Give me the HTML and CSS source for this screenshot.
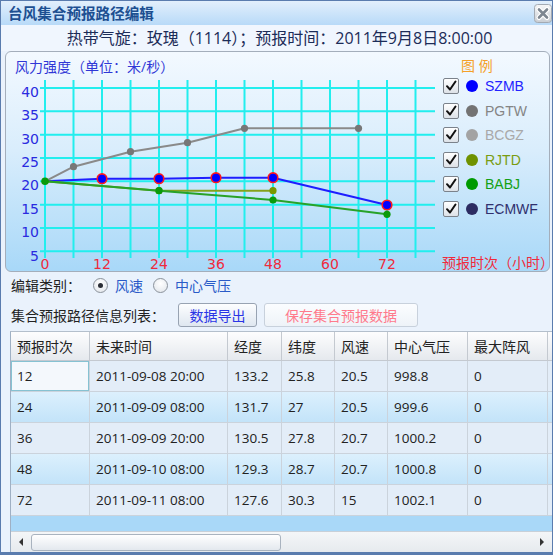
FILE: index.html
```html
<!DOCTYPE html>
<html lang="zh">
<head>
<meta charset="utf-8">
<title>台风集合预报路径编辑</title>
<link rel="stylesheet" href="styles.css">
</head>
<body>
<div class="window">
  <div class="titlebar">
    <span class="title">台风集合预报路径编辑</span>
    <svg class="close" width="18" height="19" viewBox="0 0 18 19">
      <defs>
        <linearGradient id="cg" x1="0" y1="0" x2="0" y2="1">
          <stop offset="0" stop-color="#f6f7f8"/>
          <stop offset="1" stop-color="#c9ced4"/>
        </linearGradient>
      </defs>
      <rect x="0.5" y="0.5" width="17" height="18" rx="3" fill="url(#cg)" stroke="#a3aab3"/>
      <path d="M5 5.5L13 13.5M13 5.5L5 13.5" stroke="#ffffff" stroke-width="5" stroke-linecap="round"/>
      <path d="M5 5.5L13 13.5M13 5.5L5 13.5" stroke="#7d8690" stroke-width="2.6" stroke-linecap="round"/>
    </svg>
  </div>

  <div class="header">热带气旋：玫瑰（1114）；预报时间：2011年9月8日8:00:00</div>

  <div class="panel">
    <svg class="plot" width="436" height="219" viewBox="6 52 436 219">
      <text class="ctitle" x="15" y="72">风力强度（单位：米/秒）</text>
      <path class="grid" d="M40 88H435M40 111.3H435M40 134.7H435M40 158H435M40 181.3H435M40 204.7H435M40 228H435M40 251.3H435"/>
      <path class="grid" d="M45 80V258M73.5 80V258M102 80V258M130.5 80V258M159 80V258M187.5 80V258M216 80V258M244.5 80V258M273 80V258M301.5 80V258M330 80V258M358.5 80V258M387 80V258M415.5 80V258"/>
      <g class="ylab">
        <text x="39" y="96.5">40</text>
        <text x="39" y="120">35</text>
        <text x="39" y="143.5">30</text>
        <text x="39" y="167">25</text>
        <text x="39" y="190">20</text>
        <text x="39" y="213.5">15</text>
        <text x="39" y="237">10</text>
        <text x="39" y="260.5">5</text>
      </g>
      <g class="xlab">
        <text x="45" y="268.5">0</text>
        <text x="102" y="268.5">12</text>
        <text x="159" y="268.5">24</text>
        <text x="216" y="268.5">36</text>
        <text x="273" y="268.5">48</text>
        <text x="330" y="268.5">60</text>
        <text x="387" y="268.5">72</text>
      </g>
      <polyline class="s-pgtw" points="45,181.3 73.5,166.7 130.5,151.7 187.5,142.7 244.5,128.3 358.5,128.3"/>
      <g class="d-pgtw">
        <circle cx="73.5" cy="166.7" r="3.6"/>
        <circle cx="130.5" cy="151.7" r="3.6"/>
        <circle cx="187.5" cy="142.7" r="3.6"/>
        <circle cx="244.5" cy="128.3" r="3.6"/>
        <circle cx="358.5" cy="128.3" r="3.6"/>
      </g>
      <polyline class="s-szmb" points="45,181.3 102,178.7 159,178.7 216,177.7 273,177.7 387,205"/>
      <g class="d-szmb">
        <circle cx="102" cy="178.7" r="4.8"/>
        <circle cx="159" cy="178.7" r="4.8"/>
        <circle cx="216" cy="177.7" r="4.8"/>
        <circle cx="273" cy="177.7" r="4.8"/>
        <circle cx="387" cy="205" r="4.8"/>
      </g>
      <polyline class="s-rjtd" points="45,181.3 159,190.7 273,190.7"/>
      <g class="d-rjtd">
        <circle cx="159" cy="190.7" r="3.6"/>
        <circle cx="273" cy="190.7" r="3.6"/>
      </g>
      <polyline class="s-babj" points="45,181.3 159,190.7 273,200 387,214.3"/>
      <g class="d-babj">
        <circle cx="45" cy="181.3" r="3.8"/>
        <circle cx="159" cy="190.7" r="3.6"/>
        <circle cx="273" cy="200" r="3.6"/>
        <circle cx="387" cy="214.3" r="3.6"/>
      </g>
    </svg>

    <div class="legend">
      <div class="legend-title">图 例</div>
      <div class="legend-row">
        <span class="cb"><svg width="14" height="14" viewBox="0 0 14 14"><path d="M3 7.2L6 10.5L11.5 2.5"/></svg></span>
        <span class="dot dot-szmb"></span><span class="lname n-szmb">SZMB</span>
      </div>
      <div class="legend-row">
        <span class="cb"><svg width="14" height="14" viewBox="0 0 14 14"><path d="M3 7.2L6 10.5L11.5 2.5"/></svg></span>
        <span class="dot dot-pgtw"></span><span class="lname n-pgtw">PGTW</span>
      </div>
      <div class="legend-row">
        <span class="cb"><svg width="14" height="14" viewBox="0 0 14 14"><path d="M3 7.2L6 10.5L11.5 2.5"/></svg></span>
        <span class="dot dot-bcgz"></span><span class="lname n-bcgz">BCGZ</span>
      </div>
      <div class="legend-row">
        <span class="cb"><svg width="14" height="14" viewBox="0 0 14 14"><path d="M3 7.2L6 10.5L11.5 2.5"/></svg></span>
        <span class="dot dot-rjtd"></span><span class="lname n-rjtd">RJTD</span>
      </div>
      <div class="legend-row">
        <span class="cb"><svg width="14" height="14" viewBox="0 0 14 14"><path d="M3 7.2L6 10.5L11.5 2.5"/></svg></span>
        <span class="dot dot-babj"></span><span class="lname n-babj">BABJ</span>
      </div>
      <div class="legend-row">
        <span class="cb"><svg width="14" height="14" viewBox="0 0 14 14"><path d="M3 7.2L6 10.5L11.5 2.5"/></svg></span>
        <span class="dot dot-ecmwf"></span><span class="lname n-ecmwf">ECMWF</span>
      </div>
      <div class="axis-unit">预报时次（小时）</div>
    </div>
  </div>

  <div class="edit-row">
    <span>编辑类别：</span>
    <span class="radio checked"></span><span class="rlabel">风速</span>
    <span class="radio second"></span><span class="rlabel">中心气压</span>
  </div>

  <div class="list-row">
    <span>集合预报路径信息列表：</span>
    <button class="btn btn-export">数据导出</button>
    <button class="btn btn-save">保存集合预报数据</button>
  </div>

  <div class="table">
    <div class="trow thead">
      <div class="cell">预报时次</div>
      <div class="cell">未来时间</div>
      <div class="cell">经度</div>
      <div class="cell">纬度</div>
      <div class="cell">风速</div>
      <div class="cell">中心气压</div>
      <div class="cell">最大阵风</div>
      <div class="cell"></div>
    </div>
    <div class="trow odd">
      <div class="cell selected">12</div>
      <div class="cell">2011-09-08 20:00</div>
      <div class="cell">133.2</div>
      <div class="cell">25.8</div>
      <div class="cell">20.5</div>
      <div class="cell">998.8</div>
      <div class="cell">0</div>
      <div class="cell"></div>
    </div>
    <div class="trow even">
      <div class="cell">24</div>
      <div class="cell">2011-09-09 08:00</div>
      <div class="cell">131.7</div>
      <div class="cell">27</div>
      <div class="cell">20.5</div>
      <div class="cell">999.6</div>
      <div class="cell">0</div>
      <div class="cell"></div>
    </div>
    <div class="trow odd">
      <div class="cell">36</div>
      <div class="cell">2011-09-09 20:00</div>
      <div class="cell">130.5</div>
      <div class="cell">27.8</div>
      <div class="cell">20.7</div>
      <div class="cell">1000.2</div>
      <div class="cell">0</div>
      <div class="cell"></div>
    </div>
    <div class="trow even">
      <div class="cell">48</div>
      <div class="cell">2011-09-10 08:00</div>
      <div class="cell">129.3</div>
      <div class="cell">28.7</div>
      <div class="cell">20.7</div>
      <div class="cell">1000.8</div>
      <div class="cell">0</div>
      <div class="cell"></div>
    </div>
    <div class="trow odd">
      <div class="cell">72</div>
      <div class="cell">2011-09-11 08:00</div>
      <div class="cell">127.6</div>
      <div class="cell">30.3</div>
      <div class="cell">15</div>
      <div class="cell">1002.1</div>
      <div class="cell">0</div>
      <div class="cell"></div>
    </div>
    <div class="tempty"></div>
    <div class="hscroll">
      <div class="sb-btn"><span class="tri-left"></span></div>
      <div class="sb-thumb"></div>
      <div class="sb-track"></div>
      <div class="sb-btn"><span class="tri-right"></span></div>
    </div>
  </div>
</div>
</body>
</html>
```

FILE: styles.css
```css
html, body {
  margin: 0;
  padding: 0;
  background: #ffffff;
}

body {
  font-family: "Open Sans", "Noto Sans CJK SC", sans-serif;
  color: #222222;
}

.window {
  width: 553px;
  height: 555px;
  box-sizing: border-box;
  border: 1px solid #5a7cae;
  border-bottom-width: 3px;
  background: #eaf2fc;
  display: flex;
  flex-direction: column;
  overflow: hidden;
}

/* title bar */
.titlebar {
  height: 24px;
  flex: none;
  background: linear-gradient(#e2effc, #b8daf8);
  display: flex;
  align-items: center;
  justify-content: space-between;
  padding: 0 0 0 7px;
}

.title {
  font-family: "Noto Sans CJK SC", sans-serif;
  font-size: 14.6px;
  font-weight: bold;
  color: #1d4f91;
  line-height: 24px;
}

.close {
  display: block;
  margin-top: 1px;
}

/* header */
.header {
  height: 26px;
  flex: none;
  line-height: 26px;
  text-align: center;
  font-size: 16px;
  color: #1c2c58;
  background: #f0f6fe;
  padding-left: 6px;
}

/* chart panel */
.panel {
  height: 221px;
  flex: none;
  box-sizing: border-box;
  margin: 0 2px 0 4px;
  border: 1px solid #a4aebb;
  border-radius: 6px;
  background: linear-gradient(#f3f9ff 0%, #d9edfc 45%, #a8d8f8 100%);
  display: flex;
}

.plot {
  display: block;
  flex: none;
  overflow: visible;
}

.ctitle {
  font-family: "Open Sans", "Noto Sans CJK SC", sans-serif;
  font-size: 14px;
  fill: #3037d6;
}

.grid {
  fill: none;
  stroke: #22eeee;
  stroke-width: 2;
}

.ylab text {
  font-family: "DejaVu Sans", sans-serif;
  font-size: 14px;
  fill: #2a2ae0;
  text-anchor: end;
}

.xlab text {
  font-family: "DejaVu Sans", sans-serif;
  font-size: 14px;
  fill: #f02a3c;
  text-anchor: middle;
}

.s-pgtw, .s-szmb, .s-rjtd, .s-babj {
  fill: none;
  stroke-width: 2;
  stroke-linejoin: round;
}

.s-pgtw { stroke: #8a8a8a; }
.s-szmb { stroke: #1e1eff; }
.s-rjtd { stroke: #84a21c; }
.s-babj { stroke: #28a228; }

.d-pgtw circle { fill: #777777; }
.d-szmb circle { fill: #0000ff; stroke: #ff1a1a; stroke-width: 1.6; }
.d-rjtd circle { fill: #789800; }
.d-babj circle { fill: #0a9a0a; }

/* legend */
.legend {
  flex: 1;
  display: flex;
  flex-direction: column;
  padding-top: 6px;
  min-width: 0;
}

.legend-title {
  font-size: 14px;
  line-height: 16px;
  color: #f5a028;
  padding-left: 19px;
}

.legend-row {
  height: 24.5px;
  display: flex;
  align-items: center;
  padding-left: 1px;
}

.cb {
  width: 16px;
  height: 16px;
  box-sizing: border-box;
  border: 1px solid #7b828b;
  border-radius: 2px;
  background: linear-gradient(#ffffff, #dde2e8);
  display: flex;
  align-items: center;
  justify-content: center;
}

.cb svg {
  display: block;
}

.cb path {
  fill: none;
  stroke: #111111;
  stroke-width: 2;
  stroke-linecap: round;
  stroke-linejoin: round;
}

.dot {
  width: 12px;
  height: 12px;
  border-radius: 50%;
  margin-left: 7px;
}

.dot-szmb { background: #0000ff; }
.dot-pgtw { background: #737373; }
.dot-bcgz { background: #a3a3a3; }
.dot-rjtd { background: #6f9200; }
.dot-babj { background: #009a00; }
.dot-ecmwf { background: #2c2c62; }

.lname {
  font-family: "Liberation Sans", sans-serif;
  font-size: 14px;
  margin-left: 7px;
}

.n-szmb { color: #2323ff; }
.n-pgtw { color: #858585; }
.n-bcgz { color: #a9a9a9; }
.n-rjtd { color: #7a9c12; }
.n-babj { color: #14a014; }
.n-ecmwf { color: #30306e; }

.axis-unit {
  margin-top: auto;
  font-size: 14px;
  line-height: 16px;
  color: #f02a3c;
  white-space: nowrap;
}

/* edit row */
.edit-row {
  height: 26px;
  flex: none;
  display: flex;
  align-items: center;
  padding-left: 10px;
  font-size: 14px;
  color: #222222;
}

.radio {
  width: 15px;
  height: 15px;
  box-sizing: border-box;
  border: 1px solid #8b929b;
  border-radius: 50%;
  background: radial-gradient(circle at 50% 35%, #ffffff, #dfe4ea);
  margin-left: 12px;
  display: flex;
  align-items: center;
  justify-content: center;
}

.radio.second {
  margin-left: 10px;
}

.radio.checked::after {
  content: "";
  width: 5px;
  height: 5px;
  border-radius: 50%;
  background: #2a2e36;
}

.rlabel {
  color: #2a5bc8;
  margin-left: 7px;
}

/* list row */
.list-row {
  height: 33px;
  flex: none;
  display: flex;
  align-items: center;
  padding-left: 10px;
  font-size: 14px;
  color: #222222;
}

.btn {
  height: 24px;
  box-sizing: border-box;
  border-radius: 3px;
  font-family: "Noto Sans CJK SC", sans-serif;
  font-size: 14px;
  padding: 0;
  line-height: 20px;
}

.btn-export {
  width: 79px;
  margin-left: 13px;
  border: 1px solid #98a3b2;
  background: linear-gradient(#fdfeff, #dfe7f0);
  color: #2a35e6;
}

.btn-save {
  width: 154px;
  margin-left: 7px;
  border: 1px solid #c8d1dc;
  background: linear-gradient(#fbfdff, #eef3f8);
  color: #ff7a8c;
}

/* table */
.table {
  flex: 1;
  margin-left: 9px;
  border-left: 1px solid #9fb0c4;
  border-top: 1px solid #b4bfcc;
  background: #a9d8f8;
  display: flex;
  flex-direction: column;
  min-height: 0;
}

.trow {
  display: grid;
  grid-template-columns: 79px 138px 54px 53px 53px 80px 80px 1fr;
  flex: none;
}

.thead {
  height: 29px;
  background: linear-gradient(#fdfdfe, #e4e8ed);
}

.trow.odd, .trow.even {
  height: 31px;
}

.trow.odd {
  background: #e3edf8;
}

.trow.even {
  background: linear-gradient(#dcf0fd, #c2e3f9);
}

.cell {
  box-sizing: border-box;
  border-right: 1px solid #cbd3dc;
  border-bottom: 1px solid #cbd3dc;
  padding-left: 6px;
  font-size: 13.5px;
  color: #222222;
  display: flex;
  align-items: center;
  white-space: nowrap;
  overflow: hidden;
}

.thead .cell {
  font-size: 14px;
  border-color: #c4c9d0;
}

.cell.selected {
  background: #f4f8fc;
  box-shadow: inset 0 0 0 1px #86c2d2;
}

.tempty {
  flex: 1;
}

.hscroll {
  height: 20px;
  flex: none;
  display: flex;
  align-items: center;
  background: linear-gradient(#f4f6f8, #e6eaee);
  border-top: 1px solid #c8d0d8;
}

.sb-btn {
  width: 20px;
  height: 20px;
  display: flex;
  align-items: center;
  justify-content: center;
}

.tri-left {
  width: 0;
  height: 0;
  border-top: 4px solid transparent;
  border-bottom: 4px solid transparent;
  border-right: 4px solid #333333;
}

.tri-right {
  width: 0;
  height: 0;
  border-top: 4px solid transparent;
  border-bottom: 4px solid transparent;
  border-left: 4px solid #333333;
}

.sb-thumb {
  width: 250px;
  height: 17px;
  box-sizing: border-box;
  border: 1px solid #a9b3bf;
  border-radius: 3px;
  background: linear-gradient(#ffffff, #e3e8ee);
}

.sb-track {
  flex: 1;
}
```
